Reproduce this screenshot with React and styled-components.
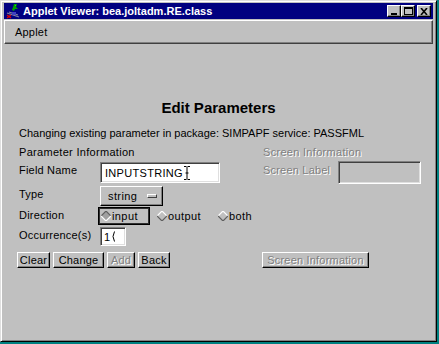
import React from 'react'
import styled, { createGlobalStyle } from 'styled-components'

const GlobalStyle = createGlobalStyle`
  html, body {
    margin: 0;
    padding: 0;
    background: #008080;
  }
  body {
    font-family: "Liberation Sans", Arial, sans-serif;
    font-size: 11px;
    color: #000;
  }
`

const Window = styled.div`
  width: 437px;
  height: 342px;
  box-sizing: border-box;
  background: #c0c0c0;
  border: 1px solid;
  border-color: #dfdfdf #000 #000 #dfdfdf;
  box-shadow: inset 1px 1px #fff, inset -1px -1px #808080;
  padding: 2px 3px 2px 3px;
  display: flex;
  flex-direction: column;
`

const TitleBar = styled.div`
  height: 16px;
  background: #000080;
  display: flex;
  align-items: center;
  padding: 0 2px 0 1px;
`

const TitleText = styled.span`
  color: #fff;
  font-weight: bold;
  font-size: 11px;
  margin-left: 2px;
`

const WinButtons = styled.div`
  margin-left: auto;
  display: flex;
  align-items: center;
`

const WinButton = styled.div`
  width: 14px;
  height: 12px;
  box-sizing: border-box;
  background: #c0c0c0;
  border: 1px solid;
  border-color: #fff #000 #000 #fff;
  box-shadow: inset -1px -1px #808080;
  display: flex;
  align-items: center;
  justify-content: center;
  margin-left: ${p => p.$gap || 0}px;
`

const MenuBar = styled.div`
  margin-top: 1px;
  height: 24px;
  box-sizing: border-box;
  border: 1px solid;
  border-color: #fff #404040 #404040 #fff;
  box-shadow: inset -1px -1px #808080;
  display: flex;
  align-items: center;
  padding-left: 10px;
`

const MenuItem = styled.span`
  font-size: 11px;
  letter-spacing: 0.2px;
`

const Body = styled.div`
  flex: 1;
  padding-top: 55px;
`

const Heading = styled.h1`
  margin: 0;
  text-align: center;
  font-size: 15px;
  line-height: 18px;
  font-weight: bold;
`

const Info = styled.div`
  margin-top: 10px;
  padding-left: 15px;
  line-height: 13px;
`

const Form = styled.div`
  margin: 6px 0 0 15px;
  display: grid;
  grid-template-columns: 81px 163px 75px 83px;
  grid-template-rows: 16px 24px 21px 20px 25px auto;
  align-items: start;
`

const Section = styled.div`
  grid-column: span 2;
  line-height: 13px;
  letter-spacing: 0.3px;
  color: ${p => (p.$disabled ? '#808080' : '#000')};
  text-shadow: ${p => (p.$disabled ? '1px 1px 0 #fff' : 'none')};
`

const Label = styled.div`
  padding-top: 2px;
  line-height: 13px;
  letter-spacing: 0.2px;
  color: ${p => (p.$disabled ? '#808080' : '#000')};
  text-shadow: ${p => (p.$disabled ? '1px 1px 0 #fff' : 'none')};
`

const TextField = styled.div`
  width: ${p => p.$w}px;
  height: ${p => p.$h}px;
  margin-top: ${p => p.$mt || 0}px;
  box-sizing: border-box;
  background: ${p => (p.$disabled ? '#c0c0c0' : '#fff')};
  border: 1px solid;
  border-color: #808080 #fff #fff #808080;
  box-shadow: inset 1px 1px #404040, inset -1px -1px #dfdfdf;
  display: flex;
  align-items: center;
  padding-left: ${p => p.$pl || 4}px;
  letter-spacing: 0.3px;
`

const Choice = styled.div`
  width: 63px;
  height: 20px;
  box-sizing: border-box;
  border: 1px solid;
  border-color: #fff #000 #000 #fff;
  box-shadow: inset -1px -1px #808080;
  display: flex;
  align-items: center;
  padding: 0 5px 0 7px;
  letter-spacing: 0.4px;
`

const ChoiceMark = styled.span`
  margin-left: auto;
  width: 10px;
  height: 4px;
  box-sizing: border-box;
  border: 1px solid;
  border-color: #fff #404040 #404040 #fff;
  background: #c0c0c0;
`

const RadioGroup = styled.div`
  grid-column: 2 / 5;
  margin-left: -2px;
  display: flex;
  align-items: center;
  height: 18px;
`

const Option = styled.div`
  height: 18px;
  width: ${p => (p.$w ? `${p.$w}px` : 'auto')};
  box-sizing: border-box;
  display: flex;
  align-items: center;
  gap: 1px;
  padding-left: 2px;
  margin-right: ${p => p.$mr || 0}px;
  border: 1px solid ${p => (p.$focus ? '#000' : 'transparent')};
  box-shadow: ${p => (p.$focus ? 'inset 0 0 0 1px #303030' : 'none')};
  letter-spacing: 0.4px;
`

const ButtonRow = styled.div`
  grid-column: ${p => p.$col};
  margin-left: ${p => p.$ml}px;
  display: flex;
  gap: 3px;
`

const Button = styled.div`
  width: ${p => p.$w}px;
  height: 16px;
  box-sizing: border-box;
  border: 1px solid;
  border-color: #fff #000 #000 #fff;
  box-shadow: inset -1px -1px #808080;
  display: flex;
  align-items: center;
  justify-content: center;
  line-height: 14px;
  letter-spacing: 0.2px;
  color: ${p => (p.$disabled ? '#808080' : '#000')};
  text-shadow: ${p => (p.$disabled ? '1px 1px 0 #fff' : 'none')};
`

const AppIcon = () => (
  <svg width="16" height="16" viewBox="0 0 16 16">
    <path d="M9 1 L12 1 L11 4 L13 6 L10 6 L9 8 L7 7 Z" fill="#00a000" />
    <path d="M10 2 L11 3" stroke="#00ff00" strokeWidth="1" />
    <path d="M2 10 L14 14 M4 9 L13 12" stroke="#8080a0" strokeWidth="1.2" />
    <path d="M2 12 L6 15 M6 12 L2 15" stroke="#e00000" strokeWidth="1.2" />
    <rect x="7" y="9" width="4" height="3" fill="#4040c0" />
  </svg>
)

const Diamond = ({ on }) => (
  <svg width="10" height="10" viewBox="0 0 10 10">
    <polygon points="5,0 10,5 5,10 0,5" fill={on ? '#a0a0a0' : '#c0c0c0'} />
    <polyline points="0,5 5,0 10,5" fill="none" stroke={on ? '#606060' : '#fff'} strokeWidth="1.2" />
    <polyline points="0,5 5,10 10,5" fill="none" stroke={on ? '#fff' : '#606060'} strokeWidth="1.2" />
  </svg>
)

const IBeam = () => (
  <svg width="6" height="14" viewBox="0 0 6 14" style={{ marginLeft: 1 }}>
    <path d="M0 0.5 H2.5 M3.5 0.5 H6 M0 13.5 H2.5 M3.5 13.5 H6 M3 1 V13 M1.5 7 H4.5" stroke="#000" strokeWidth="1" fill="none" />
  </svg>
)

const Caret = () => (
  <svg width="4" height="11" viewBox="0 0 4 11" style={{ marginLeft: 1 }}>
    <path d="M3.5 0.5 Q0.5 5.5 3.5 10.5" stroke="#000" strokeWidth="1" fill="none" />
  </svg>
)

export default function App() {
  return (
    <>
      <GlobalStyle />
      <Window>
        <TitleBar>
          <AppIcon />
          <TitleText>Applet Viewer: bea.joltadm.RE.class</TitleText>
          <WinButtons>
            <WinButton>
              <svg width="8" height="8" viewBox="0 0 8 8">
                <rect x="1" y="6" width="6" height="2" fill="#000" />
              </svg>
            </WinButton>
            <WinButton>
              <svg width="9" height="8" viewBox="0 0 9 8">
                <rect x="0.5" y="0.5" width="8" height="7" fill="none" stroke="#000" />
                <rect x="0" y="0" width="9" height="2" fill="#000" />
              </svg>
            </WinButton>
            <WinButton $gap={2}>
              <svg width="8" height="7" viewBox="0 0 8 7">
                <path d="M1 0 L7 7 M7 0 L1 7" stroke="#000" strokeWidth="1.6" />
              </svg>
            </WinButton>
          </WinButtons>
        </TitleBar>
        <MenuBar>
          <MenuItem>Applet</MenuItem>
        </MenuBar>
        <Body>
          <Heading>Edit Parameters</Heading>
          <Info>Changing existing parameter in package: SIMPAPF service: PASSFML</Info>
          <Form>
            <Section>Parameter Information</Section>
            <Section $disabled>Screen Information</Section>

            <Label>Field Name</Label>
            <TextField $w={120} $h={21}>
              INPUTSTRING
              <IBeam />
            </TextField>
            <Label $disabled>Screen Label</Label>
            <TextField $w={83} $h={23} $mt={-1} $disabled />

            <Label>Type</Label>
            <Choice>
              string
              <ChoiceMark />
            </Choice>
            <span />
            <span />

            <Label>Direction</Label>
            <RadioGroup>
              <Option $w={52} $mr={4} $focus>
                <Diamond on />
                input
              </Option>
              <Option $w={61}>
                <Diamond />
                output
              </Option>
              <Option>
                <Diamond />
                both
              </Option>
            </RadioGroup>

            <Label>Occurrence(s)</Label>
            <TextField $w={26} $h={19} $pl={3}>
              1
              <Caret />
            </TextField>
            <span />
            <span />

            <ButtonRow $col="1 / 3" $ml={-2}>
              <Button $w={33}>Clear</Button>
              <Button $w={51}>Change</Button>
              <Button $w={28} $disabled>Add</Button>
              <Button $w={32}>Back</Button>
            </ButtonRow>
            <ButtonRow $col="3 / 5" $ml={-1}>
              <Button $w={107} $disabled>Screen Information</Button>
            </ButtonRow>
          </Form>
        </Body>
      </Window>
    </>
  )
}
